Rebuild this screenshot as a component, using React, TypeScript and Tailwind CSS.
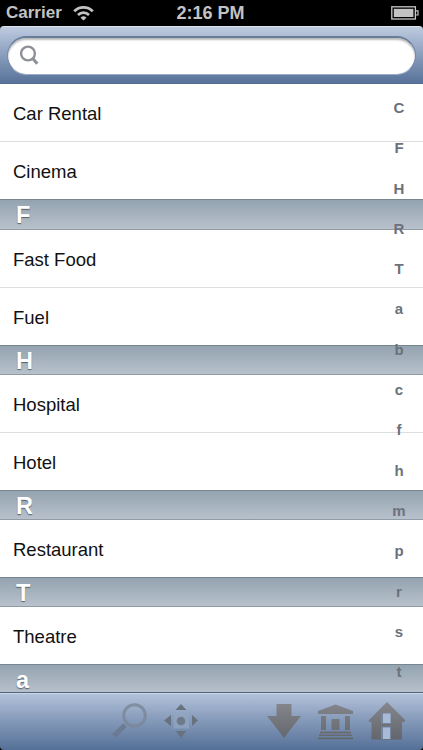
import React from 'react';
import clsx from 'clsx';

interface Section {
  title?: string;
  headerClass?: string;
  rows: string[];
}

const sections: Section[] = [
  { rows: ['Car Rental', 'Cinema'] },
  { title: 'F', headerClass: 'h-[31px]', rows: ['Fast Food', 'Fuel'] },
  { title: 'H', rows: ['Hospital', 'Hotel'] },
  { title: 'R', rows: ['Restaurant'] },
  { title: 'T', rows: ['Theatre'] },
  { title: 'a', rows: [] },
];

const indexLetters = ['C', 'F', 'H', 'R', 'T', 'a', 'b', 'c', 'f', 'h', 'm', 'p', 'r', 's', 't'];

const StatusBar = () => (
  <div className="grid h-[26px] shrink-0 grid-cols-3 items-center bg-black px-[6px] text-[17px] font-bold leading-[26px] text-[#c3c3c3]">
    <div className="flex items-center gap-[11px]">
      <span>Carrier</span>
      <svg width="21" height="16" viewBox="0 0 21 16" fill="none" stroke="#c3c3c3" strokeWidth="2.7">
        <path d="M1.2 6.2a13.2 13.2 0 0 1 18.6 0" />
        <path d="M5 9.9a8 8 0 0 1 11 0" />
        <path d="M10.5 15.6 7.5 12.8a4.3 4.3 0 0 1 6 0z" fill="#c3c3c3" stroke="none" />
      </svg>
    </div>
    <span className="pr-[2px] text-center text-[18px]">2:16 PM</span>
    <svg className="-mr-[2px] justify-self-end" width="28" height="14" viewBox="0 0 28 14" fill="none">
      <rect x="0.8" y="0.8" width="23.6" height="12.2" stroke="#c9c9c9" strokeWidth="1.3" />
      <rect x="2.8" y="2.8" width="19.6" height="8.2" fill="#c3c3c3" />
      <path d="M25 4.8h2v4.2h-2" stroke="#c3c3c3" strokeWidth="1.2" />
    </svg>
  </div>
);

const SearchBar = () => (
  <div className="h-[58px] shrink-0 bg-black">
    <div className="h-full rounded-t-[4px] border-b border-t border-b-[#526b91] border-t-[#dce2ec] bg-linear-to-b from-[#becbe0] to-[#587299] px-[7px] pt-[9px]">
      <div className="flex h-[39px] items-center rounded-full border border-t-2 border-[#7187a7] border-b-[#9aacc5] border-t-[#687c98] bg-white pb-[2px] pl-[12px] shadow-[inset_0_2px_2px_rgba(0,0,0,0.28)]">
        <svg width="20" height="21" viewBox="0 0 20 21" fill="none" stroke="#8d9097">
          <circle cx="8" cy="8.5" r="6.9" strokeWidth="2.4" />
          <path d="M12.3 13 17.300 18.800" strokeWidth="3.1" />
        </svg>
      </div>
    </div>
  </div>
);

const SectionHeader = ({ title, className = 'h-[30px]' }: { title: string; className?: string }) => (
  <div
    className={clsx(
      'flex shrink-0 items-center border-b border-t border-b-[#8f9ba5] border-t-[#77868f] bg-linear-to-b from-[#94a4b0] to-[#b8c1cc] pl-[16px] pt-[3px] text-[23.5px] font-bold leading-none text-white [text-shadow:0_1px_1px_rgba(50,60,70,0.7)]',
      className
    )}
  >
    {title}
  </div>
);

const Row = ({ label, divider }: { label: string; divider: boolean }) => (
  <div
    className={clsx(
      'flex shrink-0 items-center bg-white pl-[13px] pt-[2px] text-[18.5px] text-[#111]',
      divider ? 'h-[58px] border-b border-[#dedede]' : 'h-[57px]'
    )}
  >
    {label}
  </div>
);

const IndexBar = () => (
  <div className="absolute right-[10px] top-[4px] flex w-[28px] flex-col text-center text-[15px] font-bold text-[#6b727b]">
    {indexLetters.map((letter) => (
      <span key={letter} className="h-[40.3px] leading-[40.3px]">
        {letter}
      </span>
    ))}
  </div>
);

const Toolbar = () => (
  <div className="h-[58px] shrink-0 bg-black">
    <div className="h-full rounded-b-[4px] bg-linear-to-b from-[#b5c4db] to-[#557097] shadow-[inset_0_1px_0_#4f647f,inset_0_2px_0_#cbd7e8]">
      <svg width="423" height="58" viewBox="0 0 423 58">
        <defs>
          <linearGradient id="glyph" x1="0" y1="10" x2="0" y2="48" gradientUnits="userSpaceOnUse">
            <stop offset="0" stopColor="#85878d" />
            <stop offset="1" stopColor="#62656b" />
          </linearGradient>
        </defs>

        {/* search */}
        <g fill="none" opacity="0.8">
          <circle cx="134.5" cy="23.5" r="10.8" stroke="#7b8798" strokeWidth="3" />
          <path d="m125 33-11 11" stroke="#6a778b" strokeWidth="5" />
        </g>

        {/* locate */}
        <rect x="173.500" y="21" width="15.500" height="15.500" fill="#92a5c1" opacity="0.75" />
        <g fill="#68727f">
          <path d="M181 12l5.500 6h-11zM181 46l5-7h-10zM164 28.500l7-5.500v11zM198 28.500l-6-5.500v11z" />
          <circle cx="181" cy="29" r="4.3" opacity="0.85" />
        </g>

        {/* download */}
        <path d="M276.500 12h15v12h9.500l-17 22-17-22h9.500z" fill="url(#glyph)" />

        {/* museum */}
        <g fill="url(#glyph)">
          <path d="M335.500 12.500l17.500 6.500v3h-35v-3z" />
          <path d="M321 24h5v14h-5zM345 24h5v14h-5zM331.500 27h8v11h-8z" />
          <path d="M320 39.500h31v2h-31zM319 42.500h33v1.500h-33zM318 45.500h35v1.800h-35z" />
        </g>

        {/* home */}
        <path d="M387 10l18.500 18.500-1.500 1.500h-2v17.500h-30.500V30h-2l-1-1.500z" fill="url(#glyph)" />
        <path d="M381 21h10v11h-10zM381 34.500h10V47h-10z" fill="#7286a3" />
        <path d="M383 21.500h7.500v9.500h-7.500zM383 35.500h7V47h-7z" fill="#a9bad5" />
      </svg>
    </div>
  </div>
);

function App() {
  return (
    <div className="flex h-[750px] w-[423px] flex-col overflow-hidden bg-black font-['Liberation_Sans',Arial,sans-serif]">
      <StatusBar />
      <SearchBar />
      <div className="relative flex min-h-0 flex-1 flex-col overflow-hidden bg-white">
        {sections.map((section, i) => (
          <React.Fragment key={i}>
            {section.title && <SectionHeader title={section.title} className={section.headerClass} />}
            {section.rows.map((row, j) => (
              <Row key={row} label={row} divider={j < section.rows.length - 1} />
            ))}
          </React.Fragment>
        ))}
        <IndexBar />
      </div>
      <Toolbar />
    </div>
  );
}

export default App;
